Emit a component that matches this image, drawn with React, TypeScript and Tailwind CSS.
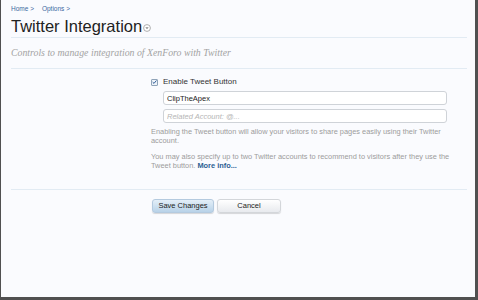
import { useState } from "react";

const sans = { fontFamily: '"Liberation Sans", Arial, sans-serif' };

function Checkbox({ checked }: { checked: boolean }) {
    return (
        <span className="flex h-[7px] w-[7px] items-center justify-center rounded-[1px] border border-[#8fa3b8] bg-[#eef3f9]">
            {checked && (
                <svg width="6" height="6" viewBox="0 0 6 6">
                    <path d="M0.8 3.1 L2.4 4.7 L5.3 1.2" stroke="#2f5d97" strokeWidth="1.2" fill="none" />
                </svg>
            )}
        </span>
    );
}

export default function App() {
    const [checked] = useState(true);
    const [account, setAccount] = useState("ClipTheApex");
    const [related, setRelated] = useState("");

    return (
        <div
            className="h-[300px] w-[478px] overflow-hidden border-l border-r-[3px] border-b-[3px] border-[#505050] bg-[#fafbfe] pl-[10px] pr-[8px]"
            style={sans}
        >
            <div className="border-b border-[#e2ebf3] pb-[1px]">
                <div className="mt-[5px] flex gap-[8px] text-[6.5px] leading-[8px] text-[#3b6aa0]">
                    <span>Home &gt;</span>
                    <span>Options &gt;</span>
                </div>
                <div className="mt-[3px] flex items-center text-[16.5px] leading-[20px] text-[#222]">
                    <span>Twitter Integration</span>
                    <svg className="ml-[1px] mt-[3px]" width="8" height="8" viewBox="0 0 8 8">
                        <circle cx="4" cy="4" r="3.4" fill="#fff" stroke="#9a9a9a" strokeWidth="0.8" />
                        <path d="M2.3 3.2 L5.7 3.2 L4 5.2 Z" fill="#888" />
                    </svg>
                </div>
            </div>

            <div
                className="border-b border-[#e2ebf3] pt-[8px] pb-[8px] text-[9.8px] leading-[14px] italic text-[#a3a3a3]"
                style={{ fontFamily: '"Liberation Serif", "Times New Roman", serif' }}
            >
                Controls to manage integration of XenForo with Twitter
            </div>

            <div className="border-b border-[#e2ebf3] pb-[19px]">
                <div className="ml-[140px] w-[302px]">
                    <label className="mt-[8px] flex h-[10px] items-center gap-[5px] text-[8px] text-[#333]">
                        <Checkbox checked={checked} />
                        <span>Enable Tweet Button</span>
                    </label>
                    <div className="ml-[12px] mt-[4px] flex flex-col gap-[4px]">
                        <input
                            value={account}
                            onChange={(e) => setAccount(e.target.value)}
                            className="h-[14px] w-[284px] rounded-[3px] border border-[#cfd3d8] bg-white px-[3px] text-[7.5px] text-[#222] outline-none"
                        />
                        <input
                            value={related}
                            onChange={(e) => setRelated(e.target.value)}
                            placeholder="Related Account: @..."
                            className="h-[14px] w-[284px] rounded-[3px] border border-[#cfd3d8] bg-white px-[3px] text-[7.5px] text-[#222] outline-none placeholder:italic placeholder:text-[#b5b5b5]"
                        />
                    </div>
                    <p className="mt-[5px] text-[7.4px] leading-[8.5px] text-[#9c9c9c]">
                        Enabling the Tweet button will allow your visitors to share pages easily using their Twitter account.
                    </p>
                    <p className="mt-[7px] text-[7.4px] leading-[9px] text-[#9c9c9c]">
                        You may also specify up to two Twitter accounts to recommend to visitors after they use the Tweet button.{" "}
                        <a className="font-bold text-[#2d5f92]">More info...</a>
                    </p>
                </div>
            </div>

            <div className="ml-[141px] mt-[9px] flex gap-[3px]">
                <button className="h-[14px] w-[62px] rounded-[3px] border border-[#b4cadf] bg-gradient-to-b from-[#e4eff8] to-[#b8d2e8] text-[7.5px] text-[#222] shadow-[0_1px_1px_rgba(0,0,0,0.15)]">
                    Save Changes
                </button>
                <button className="h-[14px] w-[64px] rounded-[3px] border border-[#d3d6da] bg-gradient-to-b from-white to-[#e8eaee] text-[7.5px] text-[#222] shadow-[0_1px_1px_rgba(0,0,0,0.15)]">
                    Cancel
                </button>
            </div>
        </div>
    );
}
